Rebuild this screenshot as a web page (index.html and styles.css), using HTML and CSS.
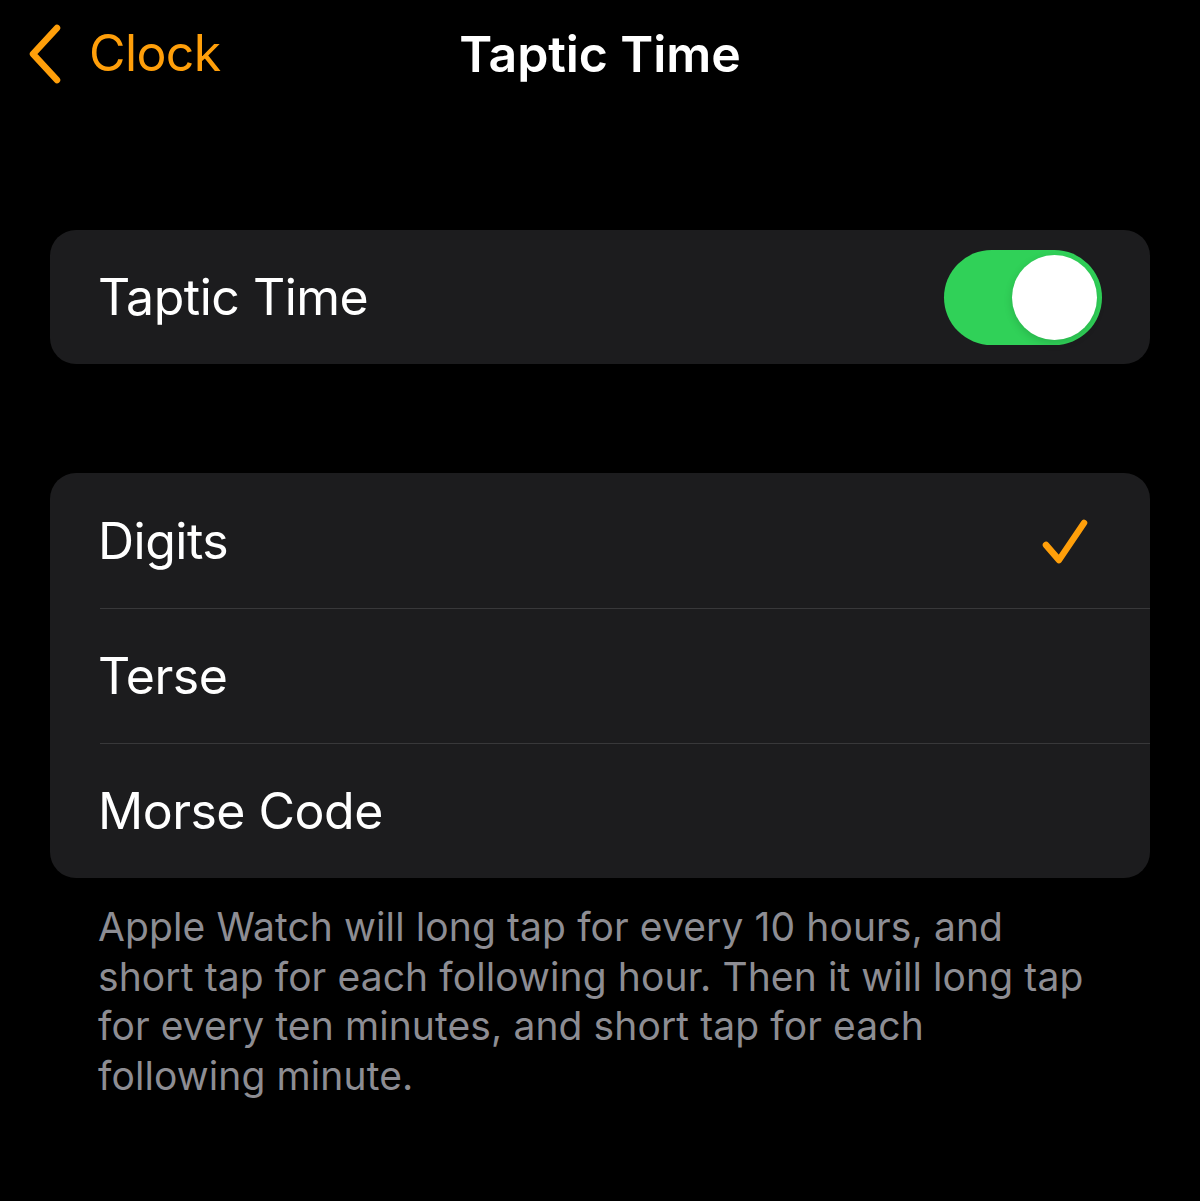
FILE: index.html
```html
<!DOCTYPE html>
<html lang="en">
<head>
<meta charset="UTF-8">
<meta name="viewport" content="width=device-width, initial-scale=1.0">
<title>Taptic Time</title>
<link rel="stylesheet" href="styles.css">
</head>
<body>
<div class="screen">
    <header class="navbar">
        <a class="back" href="#">
            <svg class="chevron" width="40" height="60" viewBox="0 0 40 60">
                <path d="M32 4 L8 30 L32 56" fill="none" stroke="#ff9f0a" stroke-width="6.5" stroke-linecap="round" stroke-linejoin="round"/>
            </svg>
            <span>Clock</span>
        </a>
        <h1 class="title">Taptic Time</h1>
    </header>

    <section class="group">
        <div class="row switch-row">
            <span class="label">Taptic Time</span>
            <span class="toggle on"><span class="knob"></span></span>
        </div>
    </section>

    <section class="group options">
        <div class="row">
            <span class="label">Digits</span>
            <svg class="check" width="50" height="50" viewBox="0 0 50 50">
                <path d="M6 27 L19 42 L44 5" fill="none" stroke="#ff9f0a" stroke-width="6.5" stroke-linecap="round" stroke-linejoin="round"/>
            </svg>
        </div>
        <div class="row">
            <span class="label">Terse</span>
        </div>
        <div class="row">
            <span class="label">Morse Code</span>
        </div>
    </section>

    <p class="footer">Apple Watch will long tap for every 10 hours, and short tap for each following hour. Then it will long tap for every ten minutes, and short tap for each following minute.</p>
</div>
</body>
</html>
```

FILE: styles.css
```css
html, body {
    margin: 0;
    padding: 0;
    background-color: #000;
}
body {
    font-family: Inter, 'Noto Sans', sans-serif;
    color: #fff;
    width: 1200px;
    height: 1201px;
    overflow: hidden;
}
.screen {
    padding: 0 50px;
}
.navbar {
    position: relative;
    height: 110px;
    display: flex;
    align-items: center;
    justify-content: center;
    margin: 0 -50px 120px;
}
.back {
    position: absolute;
    left: 25px;
    top: 24px;
    display: flex;
    align-items: center;
    gap: 24px;
    color: #ff9f0a;
    text-decoration: none;
    font-size: 50px;
    letter-spacing: -0.6px;
}
.back span {
    margin-top: -2px;
}
.title {
    margin: 0 0 2px;
    font-size: 50px;
    font-weight: 600;
    letter-spacing: -0.1px;
}
.group {
    background-color: #1c1c1e;
    border-radius: 26px;
    overflow: hidden;
}
.row {
    height: 135px;
    display: flex;
    align-items: center;
    justify-content: space-between;
    margin-left: 50px;
    padding-right: 50px;
    box-sizing: border-box;
}
.options .row + .row {
    border-top: 1.5px solid #38383a;
}
.switch-row {
    height: 134px;
    padding-right: 48px;
}
.label {
    font-size: 50px;
    letter-spacing: -0.5px;
    margin: 0 0 0 -2px;
}
.options {
    margin-top: 109px;
}
.toggle {
    width: 158px;
    height: 95px;
    border-radius: 48px;
    background-color: #30d158;
    display: flex;
    align-items: center;
    justify-content: flex-end;
    padding: 0 5px;
    box-sizing: border-box;
}
.knob {
    width: 85px;
    height: 85px;
    border-radius: 50%;
    background-color: #fff;
    box-shadow: 0 3px 8px rgba(0,0,0,0.15);
}
.check {
    margin-right: 10px;
    margin-top: 4px;
}
.footer {
    margin: 24px 0 0 48px;
    font-size: 39px;
    line-height: 49.5px;
    color: #8d8d93;
    letter-spacing: 0.1px;
    width: 1000px;
}
```
